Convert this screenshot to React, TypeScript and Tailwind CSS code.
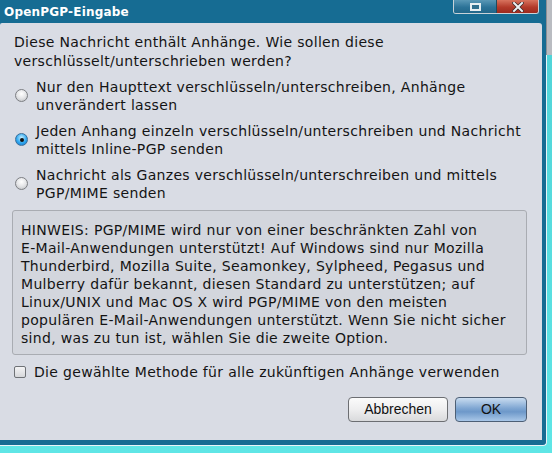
import React from "react";

function Radio({ checked }: { checked?: boolean }) {
  return (
    <div
      className={`mt-[11px] h-[13px] w-[13px] shrink-0 rounded-full border flex items-center justify-center ${
        checked
          ? "border-[#3a6f9a] bg-[radial-gradient(circle_at_50%_35%,#c9f0ff_0%,#2fa8f0_55%,#1673c8_100%)]"
          : "border-[#7d7f83] bg-[radial-gradient(circle_at_50%_35%,#ffffff_0%,#e4e5e7_50%,#b9bbbf_100%)]"
      }`}
    >
      {checked && <div className="h-[4px] w-[4px] rounded-full bg-[#111]" />}
    </div>
  );
}

export default function App() {
  return (
    <div className="relative h-[453px] w-[552px] overflow-hidden bg-[linear-gradient(180deg,#4fd2d6_0%,#5fe6e6_100%)] font-['DejaVu_Sans',sans-serif] text-[14px] tracking-[0.32px] text-[#141414]">
      {/* background window scrollbar */}
      <div className="absolute right-0 top-0 h-[55px] w-[6px] bg-[#b9bcc1] border-l border-[#8d9095]" />

      {/* dialog window */}
      <div className="flex h-[446px] w-[547px] flex-col rounded-br-[4px] border-r border-b border-[#e8f4f8] bg-[#166c93]">
        {/* title bar */}
        <div className="relative flex h-[23px] shrink-0 items-center pl-[4px] pt-[1px]">
          <span className="font-bold text-[12px] tracking-[0.2px] text-white leading-none">OpenPGP-Eingabe</span>
          <div className="absolute right-[7px] top-0 flex h-[14px] overflow-hidden rounded-b-[3px] border border-t-0 border-[#c8d2d8]">
            <div className="flex w-[43px] items-center justify-center border-r border-[#1f4a5e] bg-[linear-gradient(180deg,#5a98b6_0%,#2c7398_55%,#226789_100%)]">
              <div className="h-[8px] w-[11px] border-[2px] border-[#e6eef2] bg-[#2f6f8e]" />
            </div>
            <div className="flex w-[41px] items-center justify-center bg-[linear-gradient(180deg,#d8735e_0%,#b33a2a_55%,#9c2a1e_100%)]">
              <svg width="12" height="10" viewBox="0 0 12 10">
                <path d="M2 1 L10 9 M10 1 L2 9" stroke="#3b2a2a" strokeWidth="3.4" strokeLinecap="square" />
                <path d="M2 1 L10 9 M10 1 L2 9" stroke="#eef0f2" strokeWidth="2" strokeLinecap="square" />
              </svg>
            </div>
          </div>
        </div>

        {/* content panel */}
        <div className="mb-[5px] mr-[4px] flex flex-1 flex-col rounded-tr-[3px] rounded-tl-[2px] bg-[#d9dce4] pl-[14px] pr-[15px] pt-[10px]">
          <p className="leading-[19px]">
            Diese Nachricht enthält Anhänge. Wie sollen diese
            <br />
            verschlüsselt/unterschrieben werden?
          </p>

          <div className="mt-[7px] flex flex-col gap-[8px]">
            <div className="flex gap-[8px] pl-[1px]">
              <Radio />
              <p className="leading-[18px]">
                Nur den Haupttext verschlüsseln/unterschreiben, Anhänge
                <br />
                unverändert lassen
              </p>
            </div>
            <div className="flex gap-[8px] pl-[1px]">
              <Radio checked />
              <p className="leading-[18px]">
                Jeden Anhang einzeln verschlüsseln/unterschreiben und Nachricht
                <br />
                mittels Inline-PGP senden
              </p>
            </div>
            <div className="flex gap-[8px] pl-[1px]">
              <Radio />
              <p className="leading-[18px]">
                Nachricht als Ganzes verschlüsseln/unterschreiben und mittels
                <br />
                PGP/MIME senden
              </p>
            </div>
          </div>

          <div className="-ml-[2px] mt-[8px] rounded-[3px] border border-[#a9acb2] bg-[#d3d6dd] pb-[7px] pl-[8px] pt-[10px]">
            <p className="leading-[18px]">
              HINWEIS: PGP/MIME wird nur von einer beschränkten Zahl von
              <br />
              E-Mail-Anwendungen unterstützt! Auf Windows sind nur Mozilla
              <br />
              Thunderbird, Mozilla Suite, Seamonkey, Sylpheed, Pegasus und
              <br />
              Mulberry dafür bekannt, diesen Standard zu unterstützen; auf
              <br />
              Linux/UNIX und Mac OS X wird PGP/MIME von den meisten
              <br />
              populären E-Mail-Anwendungen unterstützt. Wenn Sie nicht sicher
              <br />
              sind, was zu tun ist, wählen Sie die zweite Option.
            </p>
          </div>

          <div className="mt-[8px] flex items-center gap-[8px] leading-[18px]">
            <div className="h-[12px] w-[12px] rounded-[2px] border border-[#6f7276] bg-[linear-gradient(180deg,#f4f4f5_0%,#d6d7da_100%)]" />
            <span>Die gewählte Methode für alle zukünftigen Anhänge verwenden</span>
          </div>

          <div className="mt-[16px] flex justify-end gap-[7px] font-['Liberation_Sans',Arial,sans-serif] text-[14px] tracking-normal">
            <button className="h-[25px] w-[100px] rounded-[4px] border border-[#6c6e72] bg-[linear-gradient(180deg,#fbfbfb_0%,#eeeeef_50%,#d9dadc_100%)] text-[#111]">
              Abbrechen
            </button>
            <button className="h-[25px] w-[72px] rounded-[4px] border border-[#4d5f75] bg-[linear-gradient(180deg,#c9dcf0_0%,#7fa6d2_45%,#6d98c9_60%,#a9c7e8_100%)] text-[#111]">
              OK
            </button>
          </div>
        </div>
      </div>
    </div>
  );
}
